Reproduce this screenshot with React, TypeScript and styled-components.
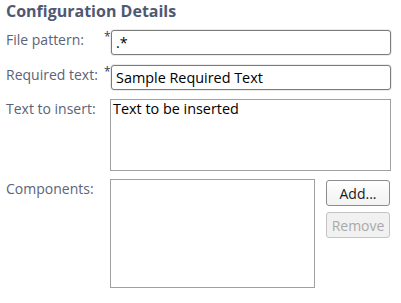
import React from "react";
import styled, { createGlobalStyle } from "styled-components";

const GlobalStyle = createGlobalStyle`
  html, body {
    margin: 0;
    padding: 0;
    background: #ffffff;
  }
  body {
    font-family: "Open Sans", "DejaVu Sans", sans-serif;
  }
`;

type FieldRowProps = {
  label: string;
  required?: boolean;
  children: React.ReactNode;
  top: number;
};

const FieldRow = (props: FieldRowProps) => {
  return (
    <Row top={props.top}>
      <Label>{props.label}</Label>
      <Star>{props.required ? "*" : ""}</Star>
      {props.children}
    </Row>
  );
};

export default function App() {
  return (
    <Page>
      <GlobalStyle />
      <Title>Configuration Details</Title>
      <FieldRow label="File pattern:" required top={9}>
        <TextInput value=".*" readOnly />
      </FieldRow>
      <FieldRow label="Required text:" required top={10}>
        <TextInput value="Sample Required Text" readOnly />
      </FieldRow>
      <FieldRow label="Text to insert:" top={9}>
        <TextArea value="Text to be inserted" readOnly />
      </FieldRow>
      <FieldRow label="Components:" top={8}>
        <ComponentsArea>
          <ListBox />
          <ButtonColumn>
            <Button>Add...</Button>
            <Button disabled>Remove</Button>
          </ButtonColumn>
        </ComponentsArea>
      </FieldRow>
    </Page>
  );
}

const Page = styled.div`
  width: 401px;
  height: 303px;
  box-sizing: border-box;
  padding: 2px 10px 0 6px;
  background: #ffffff;
`;

const Title = styled.h2`
  margin: 0;
  font-size: 16px;
  line-height: 19px;
  font-weight: 700;
  color: #4f5873;
`;

const Row = styled.div<{ top: number }>`
  display: grid;
  grid-template-columns: 98px 7px 1fr;
  align-items: start;
  margin-top: ${(p) => p.top}px;
`;

const Label = styled.span`
  font-size: 14px;
  line-height: 18px;
  padding-top: 1px;
  color: #5b6377;
  white-space: nowrap;
`;

const Star = styled.span`
  font-size: 12px;
  line-height: 12px;
  color: #2d3a5a;
  padding-top: 1px;
`;

const TextInput = styled.input`
  box-sizing: border-box;
  width: 280px;
  height: 25px;
  margin: 0;
  padding: 0 4px;
  border: 1px solid #7b7b7b;
  border-radius: 3px;
  font-family: "Open Sans", "DejaVu Sans", sans-serif;
  font-size: 14.4px;
  color: #000000;
  background: #ffffff;
  box-shadow: 0 0 0 1px #ececec;
  outline: none;
`;

const TextArea = styled.textarea`
  box-sizing: border-box;
  width: 281px;
  height: 72px;
  margin: 0 0 0 -1px;
  padding: 0 2px;
  border: 1px solid #a0a0a0;
  border-radius: 0;
  font-family: "Open Sans", "DejaVu Sans", sans-serif;
  font-size: 14.4px;
  line-height: 18px;
  color: #000000;
  resize: none;
  outline: none;
  display: block;
`;

const ComponentsArea = styled.div`
  display: flex;
  align-items: flex-start;
  gap: 11px;
  margin-left: -1px;
`;

const ListBox = styled.div`
  box-sizing: border-box;
  width: 205px;
  height: 109px;
  border: 1px solid #a0a0a0;
  background: #ffffff;
`;

const ButtonColumn = styled.div`
  display: flex;
  flex-direction: column;
  gap: 6px;
  padding-top: 1px;
`;

const Button = styled.button`
  box-sizing: border-box;
  width: 64px;
  height: 26px;
  margin: 0;
  padding: 0;
  border: 1px solid #8c8c8c;
  border-radius: 3px;
  background: linear-gradient(#ffffff, #f2f2f2);
  font-family: "Open Sans", "DejaVu Sans", sans-serif;
  font-size: 14px;
  color: #1a1a1a;

  &:disabled {
    border-color: #c4c4c4;
    background: #f1f1f1;
    color: #a9a9a9;
  }
`;
